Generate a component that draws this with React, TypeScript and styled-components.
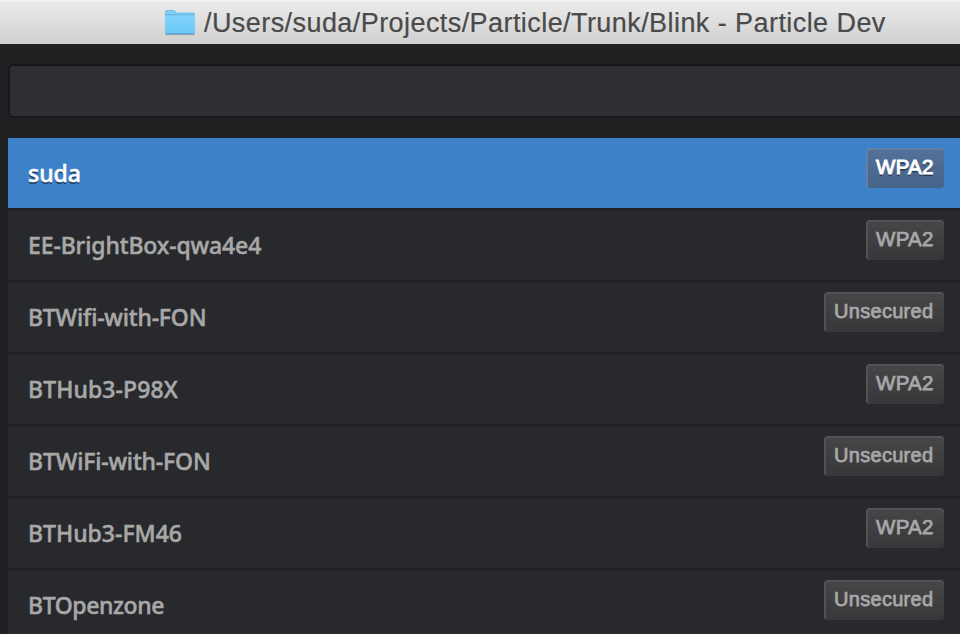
import React from "react";
import styled, { createGlobalStyle } from "styled-components";

const GlobalStyle = createGlobalStyle`
  * { box-sizing: border-box; }
  html, body { margin: 0; padding: 0; overflow: hidden; background: #202123; }
`;

const Window = styled.main`
  width: 960px;
  height: 634px;
  overflow: hidden;
  background: #202123;
`;

const TitleBar = styled.header`
  display: flex;
  align-items: flex-start;
  height: 44px;
  padding-left: 164px;
  background: linear-gradient(#f8f8f8 0, #ebebeb 2px, #d0d0d0 100%);
`;

const FolderIcon = styled.svg`
  flex: none;
  width: 32px;
  height: 28px;
  margin-top: 8px;
`;

const Title = styled.h1`
  margin: 0 0 0 8px;
  padding-top: 1px;
  font: 400 27px/44px "Liberation Sans", Arial, sans-serif;
  letter-spacing: 0.43px;
  white-space: nowrap;
  color: #4a4a4a;
  -webkit-text-stroke: 0.2px currentColor;
`;

const Panel = styled.section`
  display: flex;
  flex-direction: column;
  gap: 20px;
  padding: 20px 0 0 8px;
`;

const Search = styled.input`
  display: block;
  width: 972px;
  height: 54px;
  padding: 0 12px;
  border: 2px solid #17181a;
  border-radius: 5px;
  outline: none;
  background: #2e2f32;
  color: #c8c8c8;
  font: 22px "Noto Sans", sans-serif;
`;

const NetworkList = styled.ul`
  margin: 0;
  padding: 0;
  list-style: none;
`;

const NetworkRow = styled.li<{ $selected?: boolean }>`
  display: flex;
  justify-content: space-between;
  align-items: flex-start;
  height: 72px;
  padding: 10px 16px 0 20px;
  border-bottom: 2px solid #202123;
  background: ${(p) => (p.$selected ? "#3d82c8" : "#28292c")};
  color: ${(p) => (p.$selected ? "#ffffff" : "#a8a8a8")};
  text-shadow: ${(p) => (p.$selected ? "0 2px 0 rgba(0, 0, 0, 0.5)" : "none")};
`;

const NetworkName = styled.span<{ $tracking: number }>`
  font: 500 23px/50px "Noto Sans", "Open Sans", sans-serif;
  letter-spacing: ${(p) => p.$tracking}px;
  -webkit-text-stroke: 0.5px currentColor;
  white-space: nowrap;
`;

const Badge = styled.span<{ $selected?: boolean; $wide: boolean }>`
  width: ${(p) => (p.$wide ? 120 : 78)}px;
  height: 40px;
  padding-left: 8px;
  border: solid ${(p) => (p.$selected ? "#647f9f" : "#535355")};
  border-width: 2px 0 0 2px;
  border-radius: 4px;
  background: ${(p) =>
    p.$selected ? "linear-gradient(#527099, #466488)" : "linear-gradient(#464648, #38383a)"};
  font: 400 ${(p) => (p.$wide ? 20 : 20.5)}px/34px "Liberation Sans", Arial, sans-serif;
  letter-spacing: 0.3px;
  -webkit-text-stroke: ${(p) => (p.$selected ? 1 : 0.75)}px currentColor;
  white-space: nowrap;
`;

const networks = [
  { name: "suda", security: "WPA2", tracking: 0, selected: true },
  { name: "EE-BrightBox-qwa4e4", security: "WPA2", tracking: -0.12 },
  { name: "BTWifi-with-FON", security: "Unsecured", tracking: -0.18 },
  { name: "BTHub3-P98X", security: "WPA2", tracking: 0.1 },
  { name: "BTWiFi-with-FON", security: "Unsecured", tracking: -0.16 },
  { name: "BTHub3-FM46", security: "WPA2", tracking: 0 },
  { name: "BTOpenzone", security: "Unsecured", tracking: -0.4 },
];

function Folder() {
  return (
    <FolderIcon viewBox="0 0 32 28" aria-hidden="true">
      <defs>
        <linearGradient id="folderFront" x1="0" y1="0" x2="0" y2="1">
          <stop offset="0" stopColor="#83d5fb" />
          <stop offset="1" stopColor="#68c7f6" />
        </linearGradient>
      </defs>
      <path d="M1.500 26.500h29" stroke="#8fa3ad" strokeWidth="1.200" />
      <path d="M1 4q0-2 2-2h6.500q1 0 1.500 1l1 1.500H29q2 0 2 2V24H1z" fill="#65bde9" />
      <path d="M1.600 6V4.200q0-1.500 1.500-1.500h6.300q.8 0 1.300 1l.8 1.500H29q1.400 0 1.400 1.300z" fill="#86d0f2" />
      <path d="M1 7h30v17.500q0 1.500-1.500 1.500h-27q-1.500 0-1.500-1.500z" fill="url(#folderFront)" />
      <path d="M1 6.800h30" stroke="#59b2df" strokeWidth="0.700" />
      <path d="M1.500 25.500h29" stroke="#53addb" strokeWidth="1" />
    </FolderIcon>
  );
}

export default function App() {
  return (
    <>
      <GlobalStyle />
      <Window>
        <TitleBar>
          <Folder />
          <Title>/Users/suda/Projects/Particle/Trunk/Blink - Particle Dev</Title>
        </TitleBar>
        <Panel>
          <Search aria-label="Network" />
          <NetworkList>
            {networks.map((n) => (
              <NetworkRow key={n.name} $selected={n.selected}>
                <NetworkName $tracking={n.tracking}>{n.name}</NetworkName>
                <Badge $selected={n.selected} $wide={n.security === "Unsecured"}>
                  {n.security}
                </Badge>
              </NetworkRow>
            ))}
          </NetworkList>
        </Panel>
      </Window>
    </>
  );
}
